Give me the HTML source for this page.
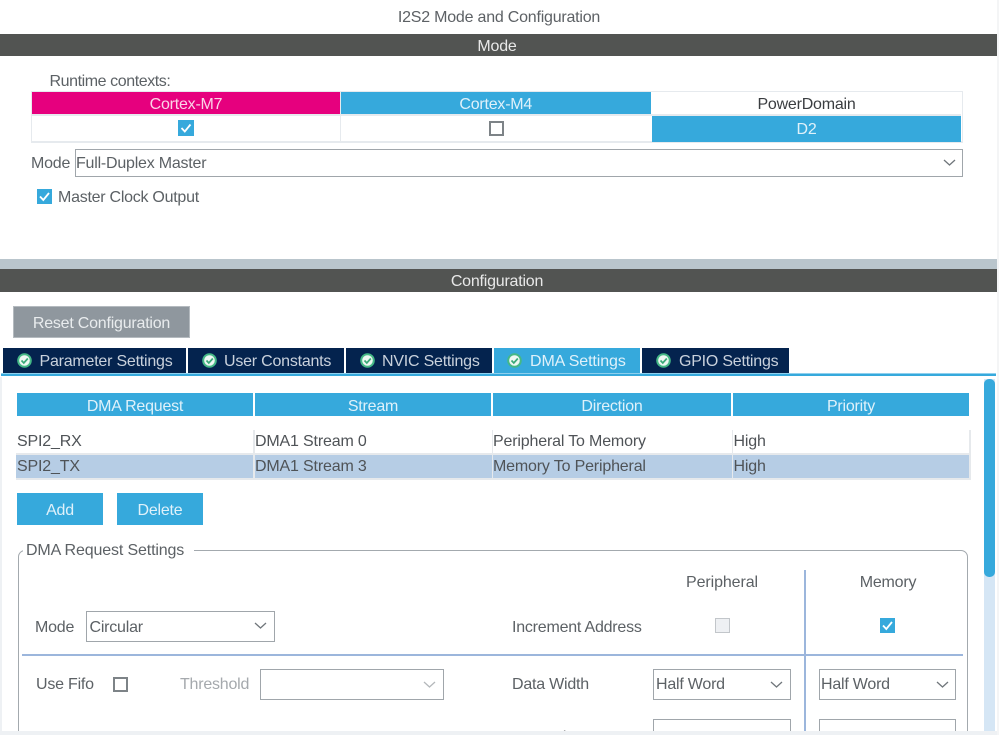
<!DOCTYPE html>
<html>
<head>
<meta charset="utf-8">
<style>
html,body{margin:0;padding:0;background:#fff;}
#p{position:relative;width:999px;height:735px;overflow:hidden;background:#fff;font-family:"Liberation Sans",sans-serif;font-size:16px;letter-spacing:-.22px;color:#5c6165;}
#p div{position:absolute;box-sizing:border-box;}
.t{white-space:nowrap;line-height:20px;height:20px;margin-top:1px;}
.c{text-align:center;}
.bar{background:#525452;color:#e8e8e8;text-align:center;left:0;width:997px;padding-right:3px;}
.blue{background:#36a9dc;color:#dff1fa;text-align:center;}
.sel{background:#fff;border:1.5px solid #a0a6ab;}
.tab{background:#04234e;color:#c9d1dc;top:348px;height:25px;}
.cell{color:#4f5357;letter-spacing:-.17px;}
svg{position:absolute;display:block;}
</style>
</head>
<body>
<div id="p">
<div class="t c" style="left:0;width:998px;top:7px;color:#5d6165">I2S2 Mode and Configuration</div>
<div class="bar" style="top:34px;height:21.5px;line-height:26px;">Mode</div>

<div class="t" style="left:49.5px;top:71px;letter-spacing:-.42px">Runtime contexts:</div>
<div style="left:31px;top:91px;width:931.5px;height:52px;background:#fff;border:1px solid #e6eaee;border-bottom-width:2px"></div>
<div style="left:32px;top:92px;width:308px;height:22px;background:#e6007e;color:#fbd3e8;text-align:center;line-height:25px">Cortex-M7</div>
<div class="blue" style="left:340.5px;top:92px;width:310.5px;height:22px;line-height:25px">Cortex-M4</div>
<div style="left:652px;top:92px;width:309px;height:22px;color:#3a3d40;text-align:center;line-height:25px">PowerDomain</div>
<div style="left:32px;top:114px;width:929px;height:1.5px;background:#e6eaee"></div>
<div style="left:340px;top:92px;width:1px;height:50px;background:#e6eaee"></div>
<div class="blue" style="left:652px;top:115.5px;width:309px;height:26px;line-height:28px">D2</div>
<svg style="left:178px;top:120px" width="16" height="16"><rect width="16" height="16" fill="#36a9dc"/><path d="M3.5 8 L6.8 11.5 L12.5 4.5" fill="none" stroke="#fff" stroke-width="1.8"/></svg>
<div style="left:488.5px;top:120.5px;width:15px;height:15px;border:2px solid #7d8387"></div>

<div class="t" style="left:31px;top:153px">Mode</div>
<div class="sel" style="left:74.5px;top:149px;width:888.5px;height:28px"></div>
<div class="t" style="left:76px;top:153px">Full-Duplex Master</div>
<svg style="left:942px;top:158px" width="16" height="10"><path d="M2 2 L7.5 7 L13 2" fill="none" stroke="#70767b" stroke-width="1.3"/></svg>

<svg style="left:37px;top:189px" width="15" height="15"><rect width="15" height="15" fill="#36a9dc"/><path d="M3 7.5 L6.3 11 L12 4" fill="none" stroke="#fff" stroke-width="1.8"/></svg>
<div class="t" style="left:58px;top:187px;letter-spacing:-.26px">Master Clock Output</div>

<div style="left:0;top:259px;width:997px;height:10px;background:#b9c5cc"></div>
<div class="bar" style="top:269px;height:23px;line-height:26px;">Configuration</div>

<div style="left:13px;top:305.5px;width:177px;height:32.5px;background:#8f979e;border:1px solid #b4babf;color:#e9ecee;text-align:center;line-height:33px">Reset Configuration</div>

<div class="tab" style="left:3px;width:183px"></div>
<div class="tab" style="left:188px;width:156px"></div>
<div class="tab" style="left:346px;width:146px"></div>
<div class="tab" style="left:494px;width:146px;background:#36a9dc;color:#dff1fa"></div>
<div class="tab" style="left:642px;width:147px"></div>

<svg style="left:17px;top:353px" width="15" height="15"><circle cx="7.5" cy="7.5" r="7.3" fill="#45b886"/><circle cx="7.5" cy="7.5" r="5.3" fill="#eef8f3"/><path d="M4.5 7.5 L6.8 10 L10.8 5.5" fill="none" stroke="#3aaa78" stroke-width="1.7"/></svg>
<svg style="left:202px;top:353px" width="15" height="15"><circle cx="7.5" cy="7.5" r="7.3" fill="#45b886"/><circle cx="7.5" cy="7.5" r="5.3" fill="#eef8f3"/><path d="M4.5 7.5 L6.8 10 L10.8 5.5" fill="none" stroke="#3aaa78" stroke-width="1.7"/></svg>
<svg style="left:359.5px;top:353px" width="15" height="15"><circle cx="7.5" cy="7.5" r="7.3" fill="#45b886"/><circle cx="7.5" cy="7.5" r="5.3" fill="#eef8f3"/><path d="M4.5 7.5 L6.8 10 L10.8 5.5" fill="none" stroke="#3aaa78" stroke-width="1.7"/></svg>
<svg style="left:507px;top:353px" width="15" height="15"><circle cx="7.5" cy="7.5" r="7.3" fill="#45b886"/><circle cx="7.5" cy="7.5" r="5.3" fill="#eef8f3"/><path d="M4.5 7.5 L6.8 10 L10.8 5.5" fill="none" stroke="#3aaa78" stroke-width="1.7"/></svg>
<svg style="left:656px;top:353px" width="15" height="15"><circle cx="7.5" cy="7.5" r="7.3" fill="#45b886"/><circle cx="7.5" cy="7.5" r="5.3" fill="#eef8f3"/><path d="M4.5 7.5 L6.8 10 L10.8 5.5" fill="none" stroke="#3aaa78" stroke-width="1.7"/></svg>

<div class="t" style="left:39.5px;top:351px;color:#c9d1dc">Parameter Settings</div>
<div class="t" style="left:224px;top:351px;color:#c9d1dc">User Constants</div>
<div class="t" style="left:382px;top:351px;color:#c9d1dc">NVIC Settings</div>
<div class="t" style="left:530px;top:351px;color:#dff1fa;letter-spacing:-.1px">DMA Settings</div>
<div class="t" style="left:679px;top:351px;color:#c9d1dc">GPIO Settings</div>

<div style="left:1px;top:373px;width:995px;height:1px;background:#8fd0ee"></div>
<div style="left:1px;top:374px;width:995px;height:2px;background:#36a9dc"></div>
<div style="left:0;top:377px;width:2px;height:358px;background:#eef1f4"></div>

<div class="blue" style="left:17px;top:393px;width:236px;height:23px;line-height:27px">DMA Request</div>
<div class="blue" style="left:255px;top:393px;width:236px;height:23px;line-height:27px">Stream</div>
<div class="blue" style="left:493px;top:393px;width:238px;height:23px;line-height:27px">Direction</div>
<div class="blue" style="left:733px;top:393px;width:236px;height:23px;line-height:27px">Priority</div>

<div style="left:16px;top:453px;width:954px;height:27px;background:#e6e9ec"></div>
<div style="left:16px;top:455px;width:954px;height:23px;background:#b6cde5"></div>
<div style="left:253px;top:430px;width:1.5px;height:48px;background:#e6e9ec"></div>
<div style="left:491.5px;top:430px;width:1.5px;height:48px;background:#e6e9ec"></div>
<div style="left:731.5px;top:430px;width:1.5px;height:48px;background:#e6e9ec"></div>
<div style="left:969px;top:430px;width:1.5px;height:50px;background:#e6e9ec"></div>

<div class="t cell" style="left:17px;top:431px">SPI2_RX</div>
<div class="t cell" style="left:255px;top:431px">DMA1 Stream 0</div>
<div class="t cell" style="left:493px;top:431px">Peripheral To Memory</div>
<div class="t cell" style="left:733.5px;top:431px">High</div>
<div class="t cell" style="left:17px;top:456px">SPI2_TX</div>
<div class="t cell" style="left:255px;top:456px">DMA1 Stream 3</div>
<div class="t cell" style="left:493px;top:456px">Memory To Peripheral</div>
<div class="t cell" style="left:733.5px;top:456px">High</div>

<div class="blue" style="left:17px;top:493px;width:86px;height:32px;line-height:35px">Add</div>
<div class="blue" style="left:117px;top:493px;width:86px;height:32px;line-height:35px">Delete</div>

<div style="left:18px;top:550px;width:949.5px;height:200px;border:1.5px solid #a3a9ae;border-radius:7px"></div>
<div style="left:23px;top:545px;width:171px;height:10px;background:#fff"></div>
<div class="t" style="left:26px;top:540px;letter-spacing:-.14px">DMA Request Settings</div>

<div class="t c" style="left:622px;width:200px;top:572px;letter-spacing:-.1px">Peripheral</div>
<div class="t c" style="left:788px;width:200px;top:572px">Memory</div>

<div class="t" style="left:35px;top:617px">Mode</div>
<div class="sel" style="left:86px;top:611px;width:189px;height:31px"></div>
<div class="t" style="left:89.5px;top:617px">Circular</div>
<svg style="left:253px;top:621px" width="16" height="10"><path d="M2 2 L7.5 7 L13 2" fill="none" stroke="#70767b" stroke-width="1.3"/></svg>

<div class="t" style="left:512px;top:617px">Increment Address</div>
<div style="left:715px;top:618px;width:15px;height:15px;background:#eef0f3;border:1.5px solid #c2c6ca"></div>
<svg style="left:880px;top:618px" width="15" height="15"><rect width="15" height="15" fill="#36a9dc"/><path d="M3 7.5 L6.3 11 L12 4" fill="none" stroke="#fff" stroke-width="1.8"/></svg>

<div style="left:22px;top:654px;width:941px;height:2px;background:#9cb6dc"></div>
<div style="left:804px;top:570px;width:2px;height:165px;background:#9cb6dc"></div>

<div class="t" style="left:36px;top:674px">Use Fifo</div>
<div style="left:113px;top:677px;width:15px;height:15px;border:2px solid #7d8387"></div>
<div class="t" style="left:180px;top:674px;color:#a5a9ad">Threshold</div>
<div class="sel" style="left:260px;top:669px;width:184px;height:31px"></div>
<svg style="left:422px;top:680px" width="16" height="10"><path d="M2 2 L7.5 7 L13 2" fill="none" stroke="#b4b8bb" stroke-width="1.3"/></svg>

<div class="t" style="left:512px;top:674px">Data Width</div>
<div class="sel" style="left:653px;top:669px;width:138px;height:31px"></div>
<div class="t" style="left:656px;top:674px">Half Word</div>
<svg style="left:769px;top:680px" width="16" height="10"><path d="M2 2 L7.5 7 L13 2" fill="none" stroke="#70767b" stroke-width="1.3"/></svg>
<div class="sel" style="left:819px;top:669px;width:137px;height:31px"></div>
<div class="t" style="left:821px;top:674px">Half Word</div>
<svg style="left:935px;top:680px" width="16" height="10"><path d="M2 2 L7.5 7 L13 2" fill="none" stroke="#70767b" stroke-width="1.3"/></svg>

<div class="t" style="left:512px;top:727px">Burst Size</div>
<div class="sel" style="left:653px;top:719px;width:138px;height:31px"></div>
<div class="sel" style="left:819px;top:719px;width:137px;height:31px"></div>

<div style="left:984px;top:379px;width:11px;height:356px;background:#d5e6f5"></div>
<div style="left:984px;top:379px;width:10.5px;height:198px;background:#36a9dc;border-radius:5px"></div>

<div style="left:0;top:731px;width:999px;height:4px;background:#eef1f4"></div>
<div style="left:997px;top:0;width:2px;height:735px;background:#f4f5f6"></div>
</div>
</body>
</html>
